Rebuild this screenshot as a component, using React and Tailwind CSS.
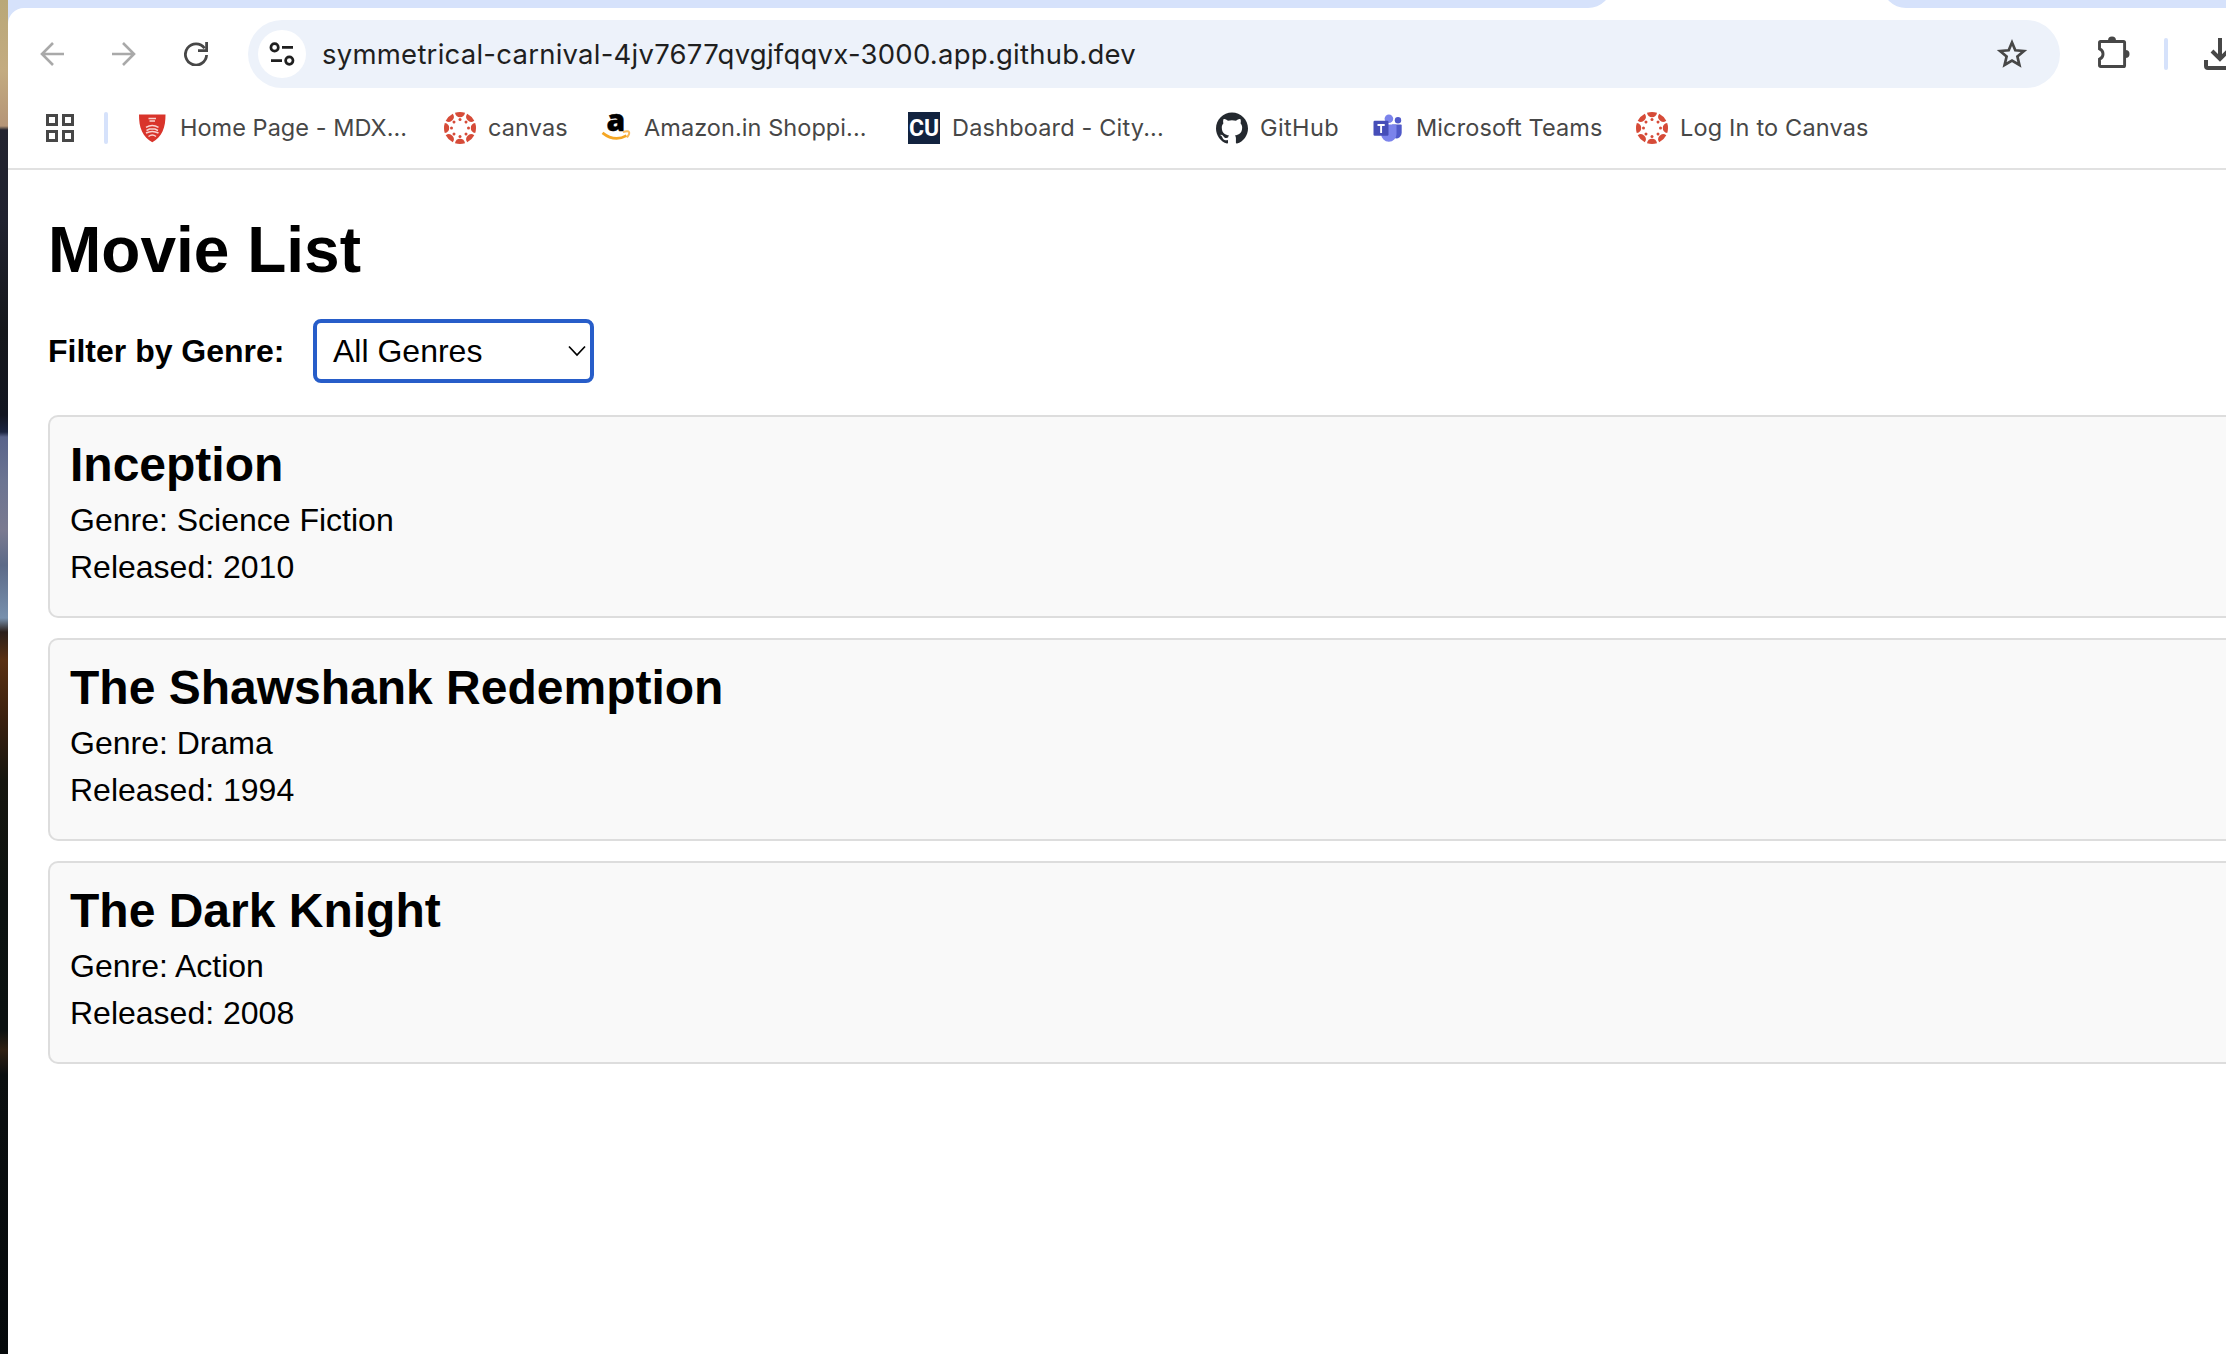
import React from "react";
import { SiGithub } from "react-icons/si";

const MOVIES = [
  { title: "Inception", genre: "Science Fiction", released: 2010 },
  { title: "The Shawshank Redemption", genre: "Drama", released: 1994 },
  { title: "The Dark Knight", genre: "Action", released: 2008 },
];

function BackIcon({ className }) {
  return (
    <svg className={className} width="24" height="24" viewBox="0 0 24 24" fill="none" stroke="#a9a9a9" strokeWidth="2.6">
      <path d="M24 12H2M13 1L2 12l11 11" />
    </svg>
  );
}

function ReloadIcon() {
  return (
    <svg width="24" height="24" viewBox="0 0 24 24" fill="none" stroke="#474747" strokeWidth="2.8">
      <path d="M20.6 6.2A10.6 10.6 0 1 0 22.6 13" />
      <path d="M22.6 0v8.6H14" />
    </svg>
  );
}

function TuneIcon() {
  return (
    <svg width="26" height="24" viewBox="0 0 26 24" fill="none" stroke="#1f1f1f" strokeWidth="2.7">
      <circle cx="5.6" cy="5.4" r="3.7" />
      <path d="M13 5.4h11M2 18.6h11" />
      <circle cx="20.3" cy="18.6" r="3.7" />
    </svg>
  );
}

function StarIcon() {
  return (
    <svg width="32" height="32" viewBox="0 0 32 32" fill="none" stroke="#474747" strokeWidth="2.7">
      <path d="M16 4.4l3.3 7.9 8.6.7-6.5 5.6 2 8.4L16 22.5 8.6 27l2-8.4L4.1 13l8.6-.7z" />
    </svg>
  );
}

function PuzzleIcon() {
  return (
    <svg width="32" height="32" viewBox="0 0 32 32">
      <path
        d="M2.600 5.500h22.900a1.100 1.100 0 0 1 1.100 1.100v22.800a1.100 1.100 0 0 1-1.100 1.100H2.600a1.100 1.100 0 0 1-1.100-1.100V23.200a5.600 5.600 0 0 0 0-10.400V6.600a1.100 1.100 0 0 1 1.100-1.100z"
        fill="none"
        stroke="#474747"
        strokeWidth="2.900"
      />
      <path d="M10 4.500a4 4 0 0 1 8 0zM27.500 14a4 4 0 0 1 0 8z" fill="#474747" />
    </svg>
  );
}

function DownloadIcon() {
  return (
    <svg className="shrink-0" width="32" height="32" viewBox="0 0 32 32" fill="none" stroke="#474747" strokeWidth="4">
      <path d="M16 0v21M8 13l8 8 8-8" />
      <path d="M2 22v6a2 2 0 0 0 2 2h24a2 2 0 0 0 2-2v-6" />
    </svg>
  );
}

function AppsIcon() {
  return (
    <svg width="28" height="28" viewBox="0 0 28 28" fill="none" stroke="#474747" strokeWidth="3">
      <path d="M1.500 1.500h9v9h-9zM17.500 1.500h9v9h-9zM1.500 17.500h9v9h-9zM17.500 17.500h9v9h-9z" />
    </svg>
  );
}

function ShieldIcon() {
  return (
    <svg width="32" height="32" viewBox="0 0 32 32">
      <path d="M3 2.500h26.500c0 6-.6 12-3 17-2 4.500-6 8.500-10.200 10.800C12 28 8 24 6 19.500c-2.400-5-3-11-3-17z" fill="#d9342b" />
      <g fill="none" stroke="#f8d3d0" strokeWidth="1.500">
        <path d="M12.500 6.500h7.500M13.500 9h5.500" />
        <path d="M10 15.300q6.200-3.600 12.500 0M10.500 18.500l3-1.500h5.500l3 1.500M10 21q6.200-3.200 12.500 0M12.500 24.500q3.800-2.800 7.500 0" />
      </g>
    </svg>
  );
}

const SPOKES = [0, 45, 90, 135, 180, 225, 270, 315];

function CanvasIcon() {
  return (
    <svg width="32" height="32" viewBox="0 0 32 32" fill="#d64b38">
      {SPOKES.map((angle) => (
        <g key={angle} transform={`rotate(${angle} 16 16)`}>
          <path d="M11 .8Q16-.8 21 .8Q20.200 5.200 16 5.200T11 .8z" />
          <circle cx="16" cy="7.500" r="1.500" />
        </g>
      ))}
    </svg>
  );
}

function AmazonIcon() {
  return (
    <svg className="overflow-visible" width="32" height="32" viewBox="0 0 32 32">
      <text x="15.800" y="19.300" textAnchor="middle" fontSize="30" fontWeight="800" fontFamily="Open Sans, sans-serif" fill="#000" stroke="#000" strokeWidth="0.500">
        a
      </text>
      <path d="M2.500 20.800q12 9.500 24 2.800" fill="none" stroke="#f5a623" strokeWidth="2.800" />
      <path d="M23 20q5-1.500 6 0t-2 5.500" fill="none" stroke="#f8b95a" strokeWidth="2" />
    </svg>
  );
}

function CityIcon() {
  return (
    <div className="flex size-8 items-center justify-center bg-[#12233f] font-['Roboto',sans-serif] text-[23px] leading-none font-bold text-white">
      <span>CU</span>
    </div>
  );
}

function TeamsIcon() {
  return (
    <svg width="32" height="32" viewBox="0 0 32 32">
      <circle cx="26" cy="8.300" r="3.200" fill="#5059c9" />
      <path d="M20 12.500h8.700c.6 0 1 .4 1 1v7.500a5.500 5.500 0 0 1-6.500 5.300z" fill="#5059c9" />
      <circle cx="16.900" cy="6.800" r="4.300" fill="#7b83eb" />
      <path d="M10 12.500h13.300c.7 0 1.200.5 1.200 1.200v8.500a7.600 7.600 0 0 1-15.300 0v-8.500c0-.7.1-1.200.8-1.200z" fill="#7b83eb" />
      <rect x="1.500" y="8.800" width="15" height="15" rx="1.200" fill="#464eb8" />
      <path d="M5.500 13h7.200M9.100 13v8" stroke="#fff" strokeWidth="1.900" />
    </svg>
  );
}

const BOOKMARKS = [
  { label: "Home Page - MDX...", icon: <ShieldIcon />, width: "w-[308px]", track: "tracking-[0.03px]" },
  { label: "canvas", icon: <CanvasIcon />, width: "w-[156px]", track: "tracking-[0.1px]" },
  { label: "Amazon.in Shoppi...", icon: <AmazonIcon />, width: "w-[308px]", track: "tracking-[0.06px]" },
  { label: "Dashboard - City...", icon: <CityIcon />, width: "w-[308px]", track: "tracking-[0.17px]" },
  { label: "GitHub", icon: <SiGithub size={32} color="#24292f" />, width: "w-[156px]", track: "tracking-[0.4px]" },
  { label: "Microsoft Teams", icon: <TeamsIcon />, width: "w-[264px]", track: "tracking-[0.1px]" },
  { label: "Log In to Canvas", icon: <CanvasIcon />, width: "w-[264px]", track: "tracking-[0.17px]" },
];

function TabStrip() {
  return (
    <div className="flex h-2 items-end overflow-hidden bg-white">
      <div className="h-10 w-[1604px] shrink-0 rounded-br-[24px] bg-[#d6e2fb]" />
      <div className="w-[270px] shrink-0" />
      <div className="h-10 grow rounded-bl-[24px] bg-[#d6e2fb]" />
    </div>
  );
}

function Toolbar() {
  return (
    <div className="flex h-[92px] items-center overflow-hidden pl-8">
      <div className="flex h-full w-[208px] shrink-0 items-center">
        <BackIcon />
        <BackIcon className="ml-12 -scale-x-100" />
        <div className="ml-12">
          <ReloadIcon />
        </div>
      </div>
      <div className="flex h-[68px] w-[1812px] shrink-0 items-center rounded-full bg-[#edf2fa] pr-8 pl-2.5">
        <div className="flex size-12 items-center justify-center rounded-full bg-white">
          <TuneIcon />
        </div>
        <span className="ml-4 grow pt-0.5 font-['Inter',sans-serif] text-[27.5px] tracking-[0.24px] whitespace-nowrap text-[#1f1f1f]">
          symmetrical-carnival-4jv7677qvgjfqqvx-3000.app.github.dev
        </span>
        <StarIcon />
      </div>
      <div className="mb-1 ml-[38px] shrink-0">
        <PuzzleIcon />
      </div>
      <div className="ml-[34px] h-8 w-1 shrink-0 rounded-full bg-[#d6e2fb]" />
      <div className="ml-9 shrink-0">
        <DownloadIcon />
      </div>
    </div>
  );
}

function BookmarksBar() {
  return (
    <div className="flex h-[70px] items-start border-b-2 border-[#e1e1e1] pt-3 pl-[38px]">
      <div className="flex h-8 w-[90px] shrink-0 items-center">
        <AppsIcon />
        <div className="ml-[30px] h-8 w-1 rounded-full bg-[#d6e2fb]" />
      </div>
      {BOOKMARKS.map((b) => (
        <div key={b.label} className={`flex h-8 shrink-0 items-center gap-3 ${b.width}`}>
          {b.icon}
          <span className={`font-['Inter',sans-serif] text-[23.5px] leading-8 whitespace-nowrap text-[#474747] ${b.track}`}>{b.label}</span>
        </div>
      ))}
    </div>
  );
}

function MovieCard({ movie }) {
  return (
    <div className="h-[203px] rounded-l-[10px] border-2 border-r-0 border-[#ddd] bg-[#f9f9f9] p-5">
      <h2 className="mb-[5px] text-[48px] leading-[55px] font-bold">{movie.title}</h2>
      <p className="text-[32px] leading-[47px]">Genre: {movie.genre}</p>
      <p className="text-[32px] leading-[47px]">Released: {movie.released}</p>
    </div>
  );
}

export default function App() {
  return (
    <div className="flex h-[1354px] w-[2226px] overflow-hidden bg-white">
      <div className="w-2 shrink-0 bg-[linear-gradient(180deg,#b9a878_0px,#c3ab80_70px,#b59577_126px,#23242f_130px,#20222f_220px,#15171b_330px,#121520_415px,#1c2440_432px,#59638a_437px,#6b7491_480px,#7a7a90_530px,#5c6a88_565px,#7790ad_618px,#2b1f1a_632px,#5a3012_660px,#3a200f_720px,#16160f_780px,#0c1210_900px,#0b1110_1030px,#2f2013_1050px,#0b0f10_1075px,#05090b_1354px)]" />
      <div className="flex min-w-0 grow flex-col">
        <TabStrip />
        <div className="bg-[linear-gradient(90deg,#d6e2fb_20px,#ffffff_20px)]">
          <div className="rounded-tl-[16px] bg-white">
            <Toolbar />
            <BookmarksBar />
          </div>
        </div>
        <main className="pt-[43px] pl-10 font-['Liberation_Sans',Arial,sans-serif] text-black">
          <h1 className="text-[64px] leading-[74px] font-bold">Movie List</h1>
          <div className="mt-8 flex h-16 items-center text-[32px]">
            <label className="w-[265px] font-bold whitespace-nowrap">Filter by Genre:</label>
            <button className="flex h-16 w-[281px] items-center justify-between rounded-[8px] border-4 border-[#275dc9] bg-white pr-1 pl-4">
              <span>All Genres</span>
              <svg width="18" height="12" viewBox="0 0 18 12" fill="none" stroke="#000" strokeWidth="1.700">
                <path d="M1 1.500l8 8.500 8-8.500" />
              </svg>
            </button>
          </div>
          <div className="mt-8 flex flex-col gap-5">
            {MOVIES.map((m) => (
              <MovieCard key={m.title} movie={m} />
            ))}
          </div>
        </main>
      </div>
    </div>
  );
}
